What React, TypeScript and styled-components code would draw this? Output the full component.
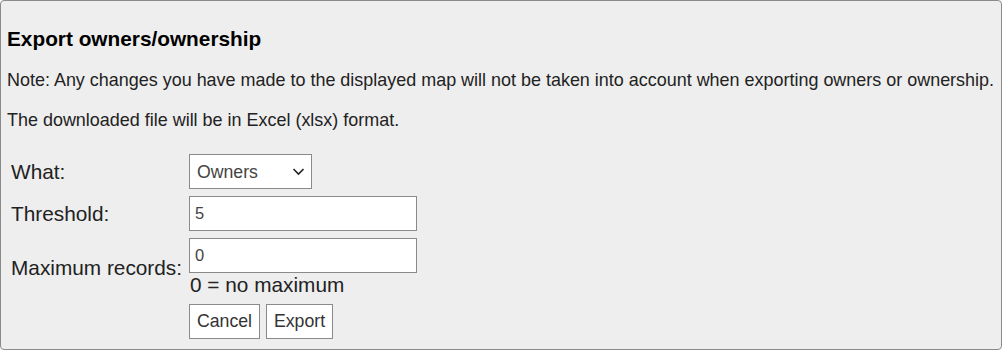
import React from "react";
import styled, { createGlobalStyle } from "styled-components";

const Global = createGlobalStyle`
  html, body { margin: 0; padding: 0; background: #ffffff; }
  body { font-family: "Liberation Sans", Arial, sans-serif; }
`;

const Panel = styled.div`
  box-sizing: border-box;
  width: 1002px;
  height: 350px;
  border: 1px solid #8a8a8a;
  border-radius: 4px;
  background: #eeeeee;
  padding: 6px 6px 10px 6px;
  color: #222222;
`;

const Title = styled.h3`
  margin: 20px 0 0 0;
  font-size: 20.8px;
  line-height: 24px;
  font-weight: bold;
  color: #000000;
`;

const Para = styled.p`
  margin: 18px 0 0 0;
  font-size: 17.97px;
  line-height: 22px;
  white-space: nowrap;
`;

const Form = styled.div`
  margin: 23px 0 0 4px;
  display: grid;
  grid-template-columns: 178px auto;
  row-gap: 7px;
  align-items: center;
`;

const Label = styled.label`
  font-size: 20.8px;
  line-height: 24px;
  color: #222222;
`;

const Field = styled.div`
  display: flex;
  flex-direction: column;
  align-items: flex-start;
`;

const SelectWrap = styled.div`
  position: relative;
  width: 123px;
  height: 35px;
`;

const Select = styled.select`
  appearance: none;
  box-sizing: border-box;
  width: 123px;
  height: 35px;
  margin: 0;
  border: 1px solid #8a8a8a;
  border-radius: 0;
  background: #ffffff;
  padding: 0 0 0 7px;
  font-family: "Liberation Sans", Arial, sans-serif;
  font-size: 17.7px;
  color: #444444;
  outline: none;
`;

const Chevron = styled.svg`
  position: absolute;
  right: 7px;
  top: 13px;
  pointer-events: none;
`;

const Input = styled.input`
  box-sizing: border-box;
  width: 228px;
  height: 35px;
  margin: 0;
  border: 1px solid #8a8a8a;
  border-radius: 0;
  background: #ffffff;
  padding: 0 0 0 5px;
  font-family: "Liberation Sans", Arial, sans-serif;
  font-size: 16.5px;
  color: #444444;
  outline: none;
`;

const Hint = styled.div`
  font-size: 20.8px;
  line-height: 24px;
  color: #222222;
  margin-left: 1px;
`;

const Buttons = styled.div`
  display: flex;
  gap: 6px;
`;

const Button = styled.button<{ $w: number }>`
  box-sizing: border-box;
  width: ${(p) => p.$w}px;
  height: 35px;
  margin: 0;
  padding: 0;
  border: 1px solid #8a8a8a;
  border-radius: 0;
  background: #ffffff;
  font-family: "Liberation Sans", Arial, sans-serif;
  font-size: 17.7px;
  color: #333333;
`;

export default function App() {
  return (
    <>
      <Global />
      <Panel>
        <Title>Export owners/ownership</Title>
        <Para>
          Note: Any changes you have made to the displayed map will not be taken into account when exporting owners or
          ownership.
        </Para>
        <Para>The downloaded file will be in Excel (xlsx) format.</Para>
        <Form>
          <Label>What:</Label>
          <Field>
            <SelectWrap>
              <Select defaultValue="owners">
                <option value="owners">Owners</option>
                <option value="ownership">Ownership</option>
              </Select>
              <Chevron width="13" height="9" viewBox="0 0 13 9">
                <path d="M1.5 2 L6.5 7 L11.5 2" fill="none" stroke="#222" strokeWidth="1.6" />
              </Chevron>
            </SelectWrap>
          </Field>
          <Label>Threshold:</Label>
          <Field>
            <Input defaultValue="5" />
          </Field>
          <Label>Maximum records:</Label>
          <Field>
            <Input defaultValue="0" />
            <Hint>0 = no maximum</Hint>
          </Field>
          <span />
          <Buttons>
            <Button $w={71}>Cancel</Button>
            <Button $w={67}>Export</Button>
          </Buttons>
        </Form>
      </Panel>
    </>
  );
}
